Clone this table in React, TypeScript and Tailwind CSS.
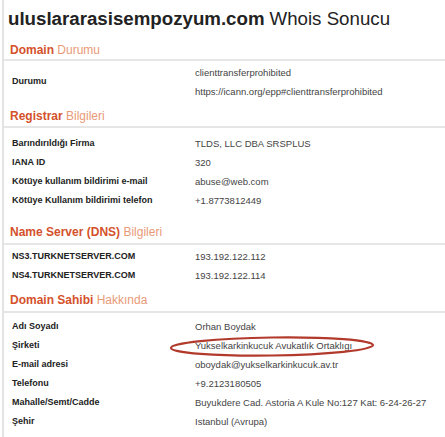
import React from "react";

type Row = { label: string; values: string[]; circled?: boolean };

const Header = ({ bold, light, pt, pb }: { bold: string; light: string; pt: string; pb: string }) => (
  <div className={`border-b-2 border-[#e6e6e6] pl-[6px] ${pt} ${pb}`}>
    <div className="h-[14px] text-[12px] leading-[14px] whitespace-nowrap">
      <span className="font-bold text-[#d4512b]">{bold}</span>{" "}
      <span className="text-[#e99a78]">{light}</span>
    </div>
  </div>
);

const Rows = ({ rows, pt }: { rows: Row[]; pt: string }) => (
  <div className={pt}>
    {rows.map((r) => (
      <div key={r.label} className="flex items-center">
        <div className="w-[191px] pl-[8px] text-[9px] font-bold text-[#222]">{r.label}</div>
        <div className="flex flex-col">
          {r.values.map((v) => (
            <div key={v} className="relative h-[19px] leading-[19px] text-[9.5px] text-[#444] whitespace-nowrap">
              {v}
              {r.circled && (
                <svg
                  className="absolute left-[-27px] top-[-1px] pointer-events-none"
                  width="210"
                  height="23"
                  viewBox="0 0 210 23"
                >
                  <ellipse
                    cx="104"
                    cy="11.5"
                    rx="101"
                    ry="9"
                    fill="none"
                    stroke="#b23a2c"
                    strokeWidth="2.2"
                    transform="rotate(-0.8 104 11.5)"
                  />
                </svg>
              )}
            </div>
          ))}
        </div>
      </div>
    ))}
  </div>
);

export default function App() {
  return (
    <div
      className="w-[445px] h-[437px] overflow-hidden bg-white"
      style={{ fontFamily: '"Liberation Sans", Arial, Helvetica, sans-serif' }}
    >
      <div className="ml-[2px] h-full border-l-2 border-[#e3e3e3]">
        <div className="h-[38px] flex items-center pl-[4px] text-[18.7px] text-[#222] whitespace-nowrap">
          <span className="font-bold">uluslararasisempozyum.com</span>
          <span className="ml-[5px]">Whois Sonucu</span>
        </div>
        <Header bold="Domain" light="Durumu" pt="pt-[5px]" pb="pb-[2px]" />
        <Rows
          pt="pt-[2px]"
          rows={[
            {
              label: "Durumu",
              values: ["clienttransferprohibited", "https://icann.org/epp#clienttransferprohibited"],
            },
          ]}
        />
        <Header bold="Registrar" light="Bilgileri" pt="pt-[8px]" pb="pb-[3px]" />
        <Rows
          pt="pt-[6px]"
          rows={[
            { label: "Barındırıldığı Firma", values: ["TLDS, LLC DBA SRSPLUS"] },
            { label: "IANA ID", values: ["320"] },
            { label: "Kötüye kullanım bildirimi e-mail", values: ["abuse@web.com"] },
            { label: "Kötüye Kullanım bildirimi telefon", values: ["+1.8773812449"] },
          ]}
        />
        <Header bold="Name Server (DNS)" light="Bilgileri" pt="pt-[15px]" pb="pb-[4px]" />
        <Rows
          pt="pt-[2px]"
          rows={[
            { label: "NS3.TURKNETSERVER.COM", values: ["193.192.122.112"] },
            { label: "NS4.TURKNETSERVER.COM", values: ["193.192.122.114"] },
          ]}
        />
        <Header bold="Domain Sahibi" light="Hakkında" pt="pt-[8px]" pb="pb-[4px]" />
        <Rows
          pt="pt-[4px]"
          rows={[
            { label: "Adı Soyadı", values: ["Orhan Boydak"] },
            { label: "Şirketi", values: ["Yukselkarkinkucuk Avukatlık Ortaklıgı"], circled: true },
            { label: "E-mail adresi", values: ["oboydak@yukselkarkinkucuk.av.tr"] },
            { label: "Telefonu", values: ["+9.2123180505"] },
            { label: "Mahalle/Semt/Cadde", values: ["Buyukdere Cad. Astoria A Kule No:127 Kat: 6-24-26-27"] },
            { label: "Şehir", values: ["Istanbul (Avrupa)"] },
          ]}
        />
      </div>
    </div>
  );
}
